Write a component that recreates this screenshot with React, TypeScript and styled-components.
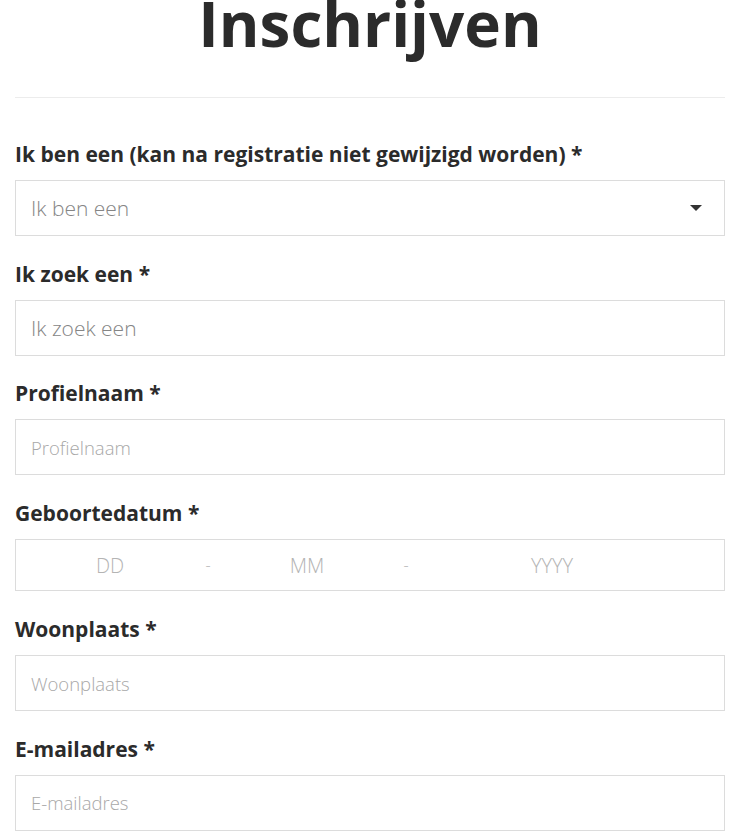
import styled, { createGlobalStyle } from "styled-components";

const pal = {
	text: "#2b2b2b",
	line: "#ececec",
	border: "#dcdcdc",
	valueGrey: "#858585",
	placeholder: "#a8a8a8",
	dateGrey: "#b4b4b4",
};

const GlobalStyle = createGlobalStyle`
	* {
		box-sizing: border-box;
	}
	body {
		margin: 0;
		background: #ffffff;
		font-family: "Open Sans", "Noto Sans", "Liberation Sans", sans-serif;
		color: ${pal.text};
	}
`;

export const Page = styled.div`
	padding: 0 14px 0 15px;
	width: 739px;
`;

export const Title = styled.h1`
	margin: 0;
	height: 46px;
	line-height: 46px;
	font-size: 62px;
	font-weight: 700;
	text-align: center;
	color: ${pal.text};
`;

export const Divider = styled.hr`
	margin: 51px 0 0 0;
	border: 0;
	border-top: 1px solid ${pal.line};
`;

export const Form = styled.form`
	display: flex;
	flex-direction: column;
	padding-top: 41px;
`;

export const Field = styled.div`
	display: flex;
	flex-direction: column;
	margin-bottom: 22.66px;
`;

export const Label = styled.label`
	height: 30px;
	line-height: 30px;
	margin-bottom: 11px;
	font-size: 21px;
	font-weight: 700;
	color: ${pal.text};
	white-space: nowrap;
`;

export const Box = styled.div`
	height: 56px;
	border: 1px solid ${pal.border};
	background: #fff;
	display: flex;
	align-items: center;
	padding: 0 22px 0 15px;
`;

export const Placeholder = styled.span<{ $size: number; $tone: string }>`
	flex: 1;
	font-size: ${(p) => p.$size}px;
	font-weight: 300;
	color: ${(p) => p.$tone};
	white-space: nowrap;
`;

export const Caret = styled.span`
	width: 0;
	height: 0;
	border-left: 6px solid transparent;
	border-right: 6px solid transparent;
	border-top: 6px solid #333;
`;

export const DateBox = styled.div`
	height: 52.5px;
	border: 1px solid ${pal.border};
	display: grid;
	grid-template-columns: 188px 8px 190px 8px 284px;
	align-items: center;
	font-size: 20px;
	font-weight: 300;
	color: ${pal.dateGrey};
`;

export const DatePart = styled.span`
	text-align: center;
`;

export const DateSep = styled.span`
	text-align: center;
	font-size: 16px;
`;

function TextField({
	label,
	placeholder,
	size,
	tone,
	select,
}: {
	label: string;
	placeholder: string;
	size: number;
	tone: string;
	select?: boolean;
}) {
	return (
		<Field>
			<Label>{label}</Label>
			<Box>
				<Placeholder $size={size} $tone={tone}>
					{placeholder}
				</Placeholder>
				{select && <Caret />}
			</Box>
		</Field>
	);
}

export default function App() {
	return (
		<>
			<GlobalStyle />
			<Page>
				<Title>Inschrijven</Title>
				<Divider />
				<Form>
					<TextField
						label="Ik ben een (kan na registratie niet gewijzigd worden) *"
						placeholder="Ik ben een"
						size={21}
						tone={pal.valueGrey}
						select
					/>
					<TextField label="Ik zoek een *" placeholder="Ik zoek een" size={21} tone={pal.valueGrey} />
					<TextField label="Profielnaam *" placeholder="Profielnaam" size={18.5} tone={pal.placeholder} />
					<Field>
						<Label>Geboortedatum *</Label>
						<DateBox>
							<DatePart>DD</DatePart>
							<DateSep>-</DateSep>
							<DatePart>MM</DatePart>
							<DateSep>-</DateSep>
							<DatePart>YYYY</DatePart>
						</DateBox>
					</Field>
					<TextField label="Woonplaats *" placeholder="Woonplaats" size={18.5} tone={pal.placeholder} />
					<TextField label="E-mailadres *" placeholder="E-mailadres" size={18.5} tone={pal.placeholder} />
				</Form>
			</Page>
		</>
	);
}
